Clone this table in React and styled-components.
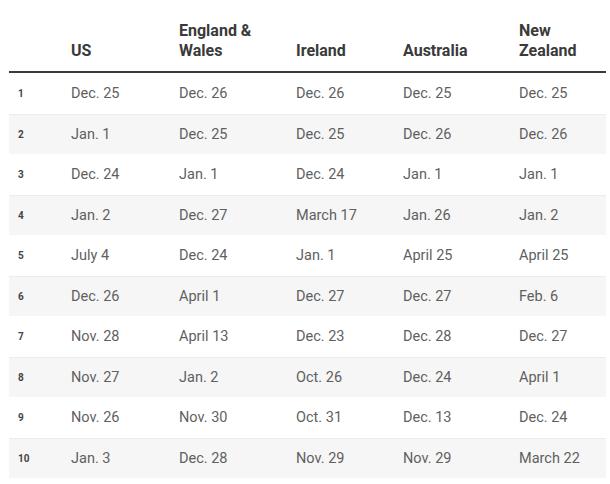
import React from "react";
import styled, { createGlobalStyle } from "styled-components";

const GlobalStyle = createGlobalStyle`
  html, body {
    margin: 0;
    padding: 0;
    background: #ffffff;
  }
  body {
    font-family: Roboto, "Liberation Sans", sans-serif;
  }
`;

const columns = ["US", "England & Wales", "Ireland", "Australia", "New Zealand"];

const rows = [
  ["Dec. 25", "Dec. 26", "Dec. 26", "Dec. 25", "Dec. 25"],
  ["Jan. 1", "Dec. 25", "Dec. 25", "Dec. 26", "Dec. 26"],
  ["Dec. 24", "Jan. 1", "Dec. 24", "Jan. 1", "Jan. 1"],
  ["Jan. 2", "Dec. 27", "March 17", "Jan. 26", "Jan. 2"],
  ["July 4", "Dec. 24", "Jan. 1", "April 25", "April 25"],
  ["Dec. 26", "April 1", "Dec. 27", "Dec. 27", "Feb. 6"],
  ["Nov. 28", "April 13", "Dec. 23", "Dec. 28", "Dec. 27"],
  ["Nov. 27", "Jan. 2", "Oct. 26", "Dec. 24", "April 1"],
  ["Nov. 26", "Nov. 30", "Oct. 31", "Dec. 13", "Dec. 24"],
  ["Jan. 3", "Dec. 28", "Nov. 29", "Nov. 29", "March 22"],
];

const Table = styled.div`
  margin: 18px 4px 0 9px;
  width: 597px;
`;

const Row = styled.div`
  display: grid;
  grid-template-columns: 53px 108px 117px 107px 116px 96px;
  align-items: center;
  height: 40.5px;
  box-sizing: border-box;
  background: ${(p) => (p.$shaded ? "#f6f6f6" : "#ffffff")};
  border-top: 1px solid ${(p) => (p.$shaded ? "#ececec" : "transparent")};
`;

const HeadRow = styled(Row)`
  height: 55px;
  align-items: end;
  padding-bottom: 10px;
  border-top: none;
  border-bottom: 2px solid #3a3a3a;
`;

const HeadCell = styled.div`
  padding-left: 9px;
  font-size: 16px;
  font-weight: 700;
  line-height: 20px;
  color: #3a3a3a;
`;

const Rank = styled.div`
  padding-left: 9px;
  font-size: 10px;
  font-weight: 700;
  color: #444444;
`;

const Cell = styled.div`
  padding-left: 9px;
  font-size: 14.5px;
  font-weight: 400;
  color: #5f5f5f;
`;

export default function App() {
  return (
    <>
      <GlobalStyle />
      <Table>
        <HeadRow>
          <HeadCell />
          {columns.map((c) => (
            <HeadCell key={c}>{c === "England & Wales" ? <>England &amp;<br />Wales</> : c === "New Zealand" ? <>New<br />Zealand</> : c}</HeadCell>
          ))}
        </HeadRow>
        {rows.map((r, i) => (
          <Row key={i} $shaded={i % 2 === 1}>
            <Rank>{i + 1}</Rank>
            {r.map((v, j) => (
              <Cell key={j}>{v}</Cell>
            ))}
          </Row>
        ))}
      </Table>
    </>
  );
}
